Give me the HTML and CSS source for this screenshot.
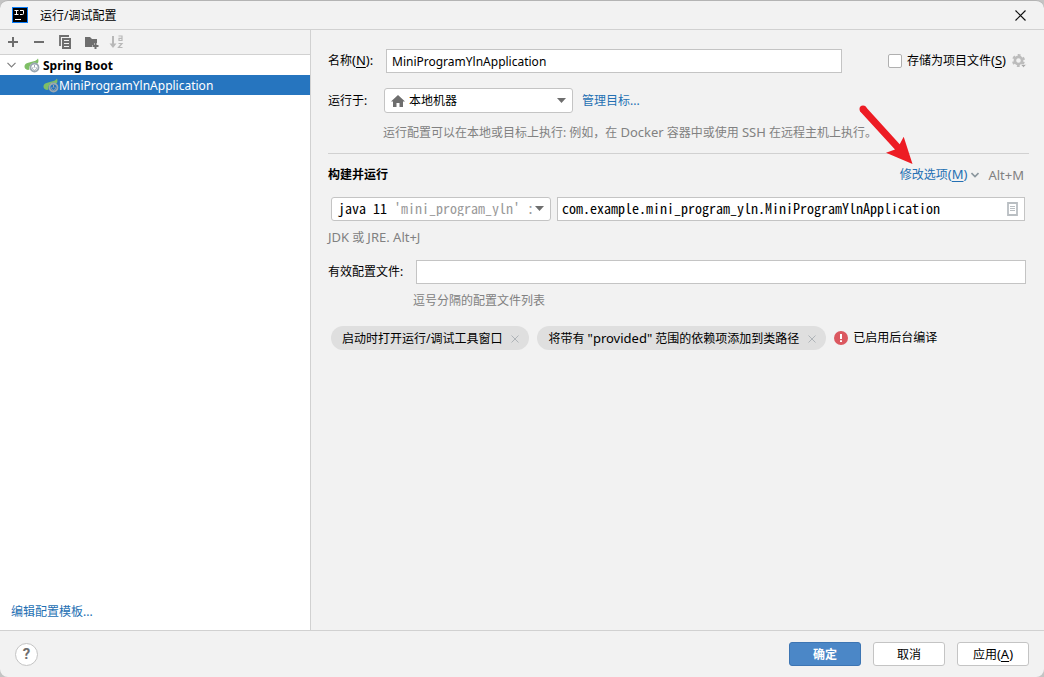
FILE: index.html
```html
<!DOCTYPE html>
<html lang="zh-CN">
<head>
<meta charset="utf-8">
<title>运行/调试配置</title>
<link rel="stylesheet" href="styles.css">
</head>
<body>
<svg class="defs" width="0" height="0" aria-hidden="true">
  <symbol id="spring" viewBox="0 0 16 16">
    <path d="M14 1.500C14.800 4 14.500 5.500 13.500 6.500 9 4 4.500 8 5.500 12.500L4 13C.5 12.500-.5 9 1.500 7 4.500 4.500 11.500 5.500 14 1.500Z" fill="#7fbf66"/>
    <circle cx="10.500" cy="10.500" r="4" fill="none" stroke="#9aa7b0" stroke-width="1.800"/>
    <path d="M10.500 8v2.500M9 10.200a1.900 1.900 0 1 0 3 0" fill="none" stroke="#9aa7b0" stroke-width="1"/>
  </symbol>
  <symbol id="cross" viewBox="0 0 8 8"><path d="M.5.5l7 7M7.500.5l-7 7" stroke="#afb4b8" fill="none"/></symbol>
</svg>
<div class="window">
  <header class="titlebar">
    <svg width="16" height="16" viewBox="0 0 16 16" aria-hidden="true">
      <rect width="16" height="16" fill="#087cfa"/><rect x="1" y="1" width="14" height="14" fill="#000"/>
      <path d="M2.500 3.500h4M4.500 3.500v4M2.500 7.500h4M8 3.500h3.500v3q0 1-1 1H8M3 12.500h6" stroke="#fff" fill="none"/>
    </svg>
    <h1 class="title">运行/调试配置</h1>
    <button class="close" aria-label="关闭"><svg width="11" height="11" viewBox="0 0 11 11"><path d="M.5.5l10 10M10.500.5l-10 10" stroke="#111" stroke-width="1.200"/></svg></button>
  </header>

  <div class="content">
    <aside class="sidebar">
      <div class="toolbar">
        <button class="tool" aria-label="添加"><svg width="16" height="16" viewBox="0 0 16 16"><path d="M8 3v10M3 8h10" stroke="#6e6e6e" stroke-width="2"/></svg></button>
        <button class="tool" aria-label="移除"><svg width="16" height="16" viewBox="0 0 16 16"><path d="M3 8h10" stroke="#6e6e6e" stroke-width="2"/></svg></button>
        <button class="tool" aria-label="复制"><svg width="16" height="16" viewBox="0 0 16 16"><path d="M3 12V2h9" fill="none" stroke="#6e6e6e" stroke-width="1.800"/><path d="M5 4h9v11H5z" fill="#6e6e6e"/><path d="M7 6.500h5M7 9.500h5M7 12.500h5" stroke="#f2f2f2" stroke-width="1.200"/></svg></button>
        <button class="tool" aria-label="新建文件夹"><svg width="16" height="16" viewBox="0 0 16 16"><path d="M2 3h5l2 2h5v4h-3v2H9v2H2z" fill="#6e6e6e"/><path d="M12.500 9v6M9.500 12h6" stroke="#6e6e6e" stroke-width="2"/></svg></button>
        <button class="tool" aria-label="排序" disabled><svg width="16" height="16" viewBox="0 0 16 16" fill="none" stroke="#b8b8b8"><path d="M4 2v9" stroke-width="2"/><path d="M.5 9.500h7L4 14z" fill="#b8b8b8" stroke="none"/><path d="M9.500 2h3.500v4.500h-3V4.300H13M9.500 9.500h3.500l-3.500 4h4" stroke-width="1.200"/></svg></button>
      </div>
      <ul class="tree">
        <li class="node group"><svg class="chevron" width="9" height="6" viewBox="0 0 9 6"><path d="M.5.8l4 4 4-4" fill="none" stroke="#7f7f7f" stroke-width="1.200"/></svg><svg class="leaf" width="16" height="16"><use href="#spring"/></svg><span>Spring Boot</span></li>
        <li class="node selected"><svg class="leaf" width="16" height="16"><use href="#spring"/></svg><span>MiniProgramYlnApplication</span></li>
      </ul>
      <a class="link templates" href="#">编辑配置模板...</a>
    </aside>

    <main class="form">
      <div class="row name-row">
        <label class="label" for="name">名称<span class="latin">(<u>N</u>):</span></label>
        <input class="field name" id="name" type="text" value="MiniProgramYlnApplication">
        <div class="store">
          <input class="check" id="store" type="checkbox">
          <label for="store">存储为项目文件<span class="latin">(<u>S</u>)</span></label>
          <button class="plain" aria-label="存储设置"><svg width="16" height="16" viewBox="0 0 16 16"><circle cx="7.500" cy="7.500" r="3.600" fill="none" stroke="#bcbcbc" stroke-width="2.600"/><circle cx="7.500" cy="7.500" r="5.400" fill="none" stroke="#bcbcbc" stroke-width="2.200" stroke-dasharray="2.800 2.855" stroke-dashoffset="-1.400"/><path d="M9.500 11.500h6l-3 3z" fill="#aaa" stroke="#f2f2f2" stroke-width=".6"/></svg></button>
        </div>
      </div>
      <div class="row target-row">
        <label class="label" for="target">运行于:</label>
        <div class="combo target">
          <svg width="14" height="12" viewBox="0 0 14 12" aria-hidden="true"><path d="M7 0l7 6.500h-2V12H8.500V8h-3v4H2V6.500H0z" fill="#6e6e6e"/></svg>
          <select class="select" id="target"><option>本地机器</option></select>
          <svg width="9" height="5" viewBox="0 0 9 5" aria-hidden="true"><path d="M0 0h9L4.500 5z" fill="#6e6e6e"/></svg>
        </div>
        <a class="link" href="#">管理目标...</a>
      </div>
      <p class="hint target-hint">运行配置可以在本地或目标上执行: 例如，在 <span class="latin">Docker</span> 容器中或使用 <span class="latin">SSH</span> 在远程主机上执行。</p>

      <section class="build">
        <div class="row build-head">
          <h2 class="heading">构建并运行</h2>
          <div class="modify">
            <a class="link" href="#">修改选项<span class="latin">(<u>M</u>)</span></a>
            <svg width="8" height="6" viewBox="0 0 8 6" aria-hidden="true"><path d="M.5 1l3.500 3.500L7.500 1" fill="none" stroke="#8c979e" stroke-width="1.600"/></svg>
            <span class="hint latin">Alt+M</span>
            <svg class="arrow" width="56" height="60" viewBox="0 0 56 60" aria-hidden="true"><path d="M8.400 3.500L42.700 41.300 46.700 33.700 55.500 61 29 49.700 38 46.600 3.200 8.600Z" fill="#ed1c24"/><circle cx="6" cy="6" r="3.500" fill="#ed1c24"/></svg>
          </div>
        </div>
        <div class="row run-row">
          <div class="combo jdk">
            <label for="jdk">java 11</label>
            <select class="select" id="jdk"><option>'mini_program_yln' :</option></select>
            <svg width="9" height="5" viewBox="0 0 9 5" aria-hidden="true"><path d="M0 0h9L4.500 5z" fill="#6e6e6e"/></svg>
          </div>
          <div class="main-class">
            <input class="mono-input" type="text" aria-label="主类" value="com.example.mini_program_yln.MiniProgramYlnApplication">
            <button class="plain" aria-label="浏览"><svg width="11" height="14" viewBox="0 0 11 14"><path d="M1 1h9v12H1z" fill="none" stroke="#b9bec2" stroke-width="1.800"/><path d="M3 4.500h5M3 6.500h5M3 8.500h5" stroke="#b9bec2"/></svg></button>
          </div>
        </div>
        <p class="hint jdk-hint"><span class="latin">JDK</span> 或 <span class="latin">JRE. Alt+J</span></p>
        <div class="row profile-row">
          <label class="label" for="profiles">有效配置文件:</label>
          <input class="field profiles" id="profiles" type="text">
        </div>
        <p class="hint profile-hint">逗号分隔的配置文件列表</p>
        <div class="row chips">
          <span class="chip">启动时打开运行/调试工具窗口<button class="plain" aria-label="移除"><svg width="8" height="8"><use href="#cross"/></svg></button></span>
          <span class="chip"><span>将带有 <span class="latin">"provided"</span> 范围的依赖项添加到类路径</span><button class="plain" aria-label="移除"><svg width="8" height="8"><use href="#cross"/></svg></button></span>
          <span class="status"><svg width="14" height="14" viewBox="0 0 14 14" aria-hidden="true"><circle cx="7" cy="7" r="7" fill="#db5860"/><path d="M7 3v5M7 9.200v1.900" stroke="#fff" stroke-width="2"/></svg>已启用后台编译</span>
        </div>
      </section>
    </main>
  </div>

  <footer class="footer">
    <button class="help" aria-label="帮助">?</button>
    <div class="actions">
      <button class="button primary">确定</button>
      <button class="button">取消</button>
      <button class="button">应用<span class="latin">(<u>A</u>)</span></button>
    </div>
  </footer>
</div>
</body>
</html>
```
FILE: styles.css
```css
* { box-sizing: border-box; }

body {
  margin: 0;
  background: #c4c4c4;
  color: #000;
  font: 12px/16px "Noto Sans", "Noto Sans CJK SC", sans-serif;
}

button, input, select { font: inherit; color: inherit; }
h1, h2, p, ul { margin: 0; padding: 0; font-size: 12px; }
ul { list-style: none; }
svg { display: block; flex: none; }
u { text-underline-offset: 2px; }

.defs { position: absolute; }
.latin { font-size: 13px; line-height: 12px; }

.window {
  display: flex;
  flex-direction: column;
  min-height: 100vh;
  border-top: 1px solid #b4b4b4;
  border-radius: 8px;
  background: #f2f2f2;
  overflow: hidden;
}

.titlebar {
  display: flex;
  align-items: center;
  height: 29px;
  padding: 0 16px 0 12px;
  gap: 12px;
  border-bottom: 1px solid #d1d1d1;
}
.title { padding-top: 2px; font-weight: 400; }
.close {
  margin-left: auto;
  padding: 2px;
  border: 0;
  background: none;
}

.content { display: flex; flex: 1; }

.sidebar {
  display: flex;
  flex-direction: column;
  width: 311px;
  flex: none;
  border-right: 1px solid #d1d1d1;
  background: #fff;
}
.toolbar {
  display: flex;
  align-items: center;
  gap: 10px;
  height: 25px;
  padding: 0 5px;
  border-bottom: 1px solid #d1d1d1;
  background: #f2f2f2;
}
.tool, .plain { padding: 0; border: 0; background: none; }

.node {
  display: flex;
  align-items: center;
  height: 20px;
}
.node span { padding-top: 1px; }
.group { padding-left: 7px; font-weight: 700; }
.chevron { margin-right: 8px; }
.leaf { margin-right: 3px; }
.selected { padding-left: 43px; background: #2675bf; color: #fff; }
.selected .leaf { margin-right: 0; }
.templates { margin: auto 0 10px 11px; align-self: flex-start; }

.link { color: #2470b3; text-decoration: none; }
.hint { color: #818181; }

.form { flex: 1; min-width: 0; padding: 19px 15px 20px 17px; }
.row { display: flex; align-items: center; }

.field, .combo, .main-class { border: 1px solid #c4c4c4; background: #fff; }
.field { height: 24px; padding: 0 5px; min-width: 0; }

.name-row .label { width: 58px; }
.name { flex: 1; }
.store {
  display: flex;
  align-items: center;
  gap: 5px;
  margin-left: 46px;
  padding-right: 2px;
}
.check {
  appearance: none;
  width: 14px;
  height: 14px;
  margin: 0;
  border: 1px solid #b0b0b0;
  border-radius: 2px;
  background: #fff;
}

.target-row { margin-top: 15px; }
.target-row .label { width: 56px; }
.target-row .link { margin-left: 9px; }
.combo {
  display: flex;
  align-items: center;
  height: 24px;
  padding: 0 6px;
  border-radius: 3px;
}
.target { width: 189px; height: 25px; gap: 4px; }
.select {
  appearance: none;
  flex: 1;
  min-width: 0;
  height: 20px;
  padding: 0;
  border: 0;
  background: none;
}
.target-hint { margin: 12px 0 0 55px; }

.build {
  margin-top: 12px;
  padding-top: 13px;
  border-top: 1px solid #d1d1d1;
}
.build-head { justify-content: space-between; }
.heading { font-weight: 700; }
.modify {
  position: relative;
  display: flex;
  align-items: center;
  gap: 4px;
  padding-right: 5px;
}
.modify .hint { margin-left: 5px; }
.arrow {
  position: absolute;
  right: 116px;
  bottom: 20px;
  overflow: visible;
}

.run-row { margin: 14px 4px 0 3px; gap: 6px; }
.jdk, .mono-input { font: 14px/16px "Noto Sans Mono CJK SC", "DejaVu Sans Mono", monospace; }
.jdk { width: 220px; gap: 2px; padding-bottom: 2px; }
.jdk label { margin-right: 5px; }
.jdk .select { color: #999; }
.main-class {
  display: flex;
  align-items: center;
  flex: 1;
  height: 24px;
  padding: 0 6px 0 4px;
}
.mono-input {
  flex: 1;
  min-width: 0;
  height: 20px;
  padding: 0 0 2px;
  border: 0;
  background: none;
}
.jdk-hint { margin-top: 9px; }
.profile-row { margin: 14px 3px 0 0; }
.profile-row .label { width: 88px; }
.profiles { flex: 1; }
.profile-hint { margin: 9px 0 0 85px; }

.chips { margin: 17px 0 0 3px; gap: 8px; }
.chip {
  display: flex;
  align-items: center;
  gap: 9px;
  height: 24px;
  padding: 2px 10px 0 11px;
  border-radius: 12px;
  background: #dfdfdf;
}
.status { display: flex; align-items: center; gap: 5px; }

.footer {
  display: flex;
  align-items: center;
  justify-content: space-between;
  height: 47px;
  padding: 0 15px;
  border-top: 1px solid #d1d1d1;
}
.help {
  width: 23px;
  height: 23px;
  padding: 0;
  border: 1px solid #c4c4c4;
  border-radius: 50%;
  background: #fff;
  color: #6e6e6e;
  font: 700 15px/20px Roboto, sans-serif;
}
.actions { display: flex; gap: 12px; }
.button {
  width: 72px;
  height: 24px;
  padding: 2px 0 0;
  border: 1px solid #c4c4c4;
  border-radius: 3px;
  background: #fff;
}
.primary { border-color: #3d75b3; background: #4b87c7; color: #fff; font-weight: 700; }
```
